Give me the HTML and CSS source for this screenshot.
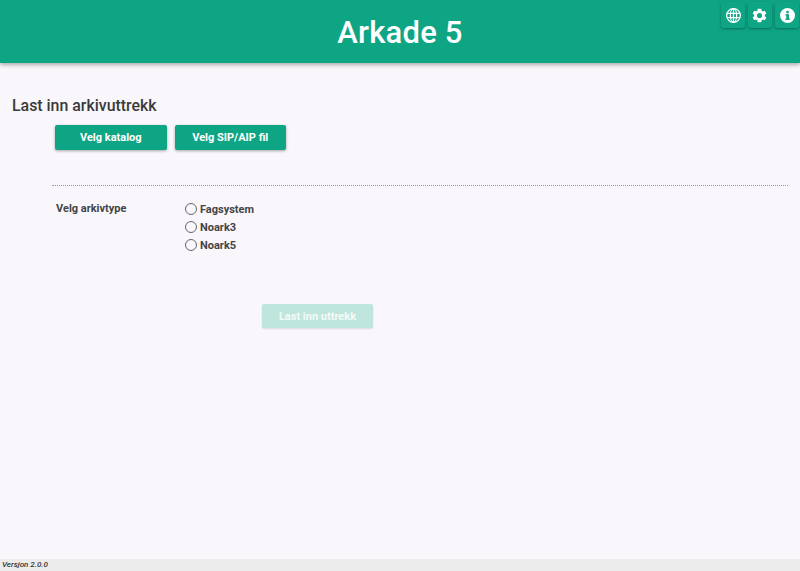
FILE: index.html
```html
<!DOCTYPE html>
<html lang="no">
<head>
<meta charset="utf-8">
<title>Arkade 5</title>
<link rel="stylesheet" href="styles.css">
</head>
<body>
<div class="app">
  <header class="header">
    <h1 class="title">Arkade 5</h1>
    <div class="actions">
      <button class="icon-btn" aria-label="Språk">
        <svg viewBox="0 0 24 24" width="15" height="15" fill="none" stroke="#fff" stroke-width="2"><circle cx="12" cy="12" r="11"/><ellipse cx="12" cy="12" rx="5" ry="11"/><path d="M12 1v22M1.5 8.5h21M1.5 15.5h21"/></svg>
      </button>
      <button class="icon-btn gear" aria-label="Innstillinger">
        <svg viewBox="0 0 24 24" width="17" height="17" fill="#fff"><path d="M19.4 13a7.6 7.6 0 0 0 0-2l2.3-1.8-2.3-3.9-2.7 1.1a7.4 7.4 0 0 0-1.7-1L14.6 2.5H9.4L9 5.4a7.4 7.4 0 0 0-1.7 1L4.6 5.3 2.3 9.2 4.6 11a7.6 7.6 0 0 0 0 2l-2.3 1.8 2.3 3.9 2.7-1.1a7.4 7.4 0 0 0 1.7 1l.4 2.9h5.2l.4-2.9a7.4 7.4 0 0 0 1.7-1l2.7 1.1 2.3-3.9zM12 15.6a3.6 3.6 0 1 1 0-7.2 3.6 3.6 0 0 1 0 7.2z"/></svg>
      </button>
      <button class="icon-btn" aria-label="Informasjon">
        <svg viewBox="0 0 24 24" width="15" height="15"><circle cx="12" cy="12" r="12" fill="#fff"/><rect x="10" y="10" width="4.4" height="9" fill="#0ea585"/><rect x="8.6" y="10" width="4" height="2" fill="#0ea585"/><rect x="8.6" y="17" width="7.2" height="2" fill="#0ea585"/><circle cx="12" cy="6.5" r="2.2" fill="#0ea585"/></svg>
      </button>
    </div>
  </header>

  <main class="main">
    <h2 class="heading">Last inn arkivuttrekk</h2>
    <div class="pickers">
      <button class="btn">Velg katalog</button>
      <button class="btn">Velg SIP/AIP fil</button>
    </div>
    <hr class="divider">
    <div class="type-row">
      <div class="type-label">Velg arkivtype</div>
      <div class="radios">
        <label class="radio"><span class="dot"></span>Fagsystem</label>
        <label class="radio"><span class="dot"></span>Noark3</label>
        <label class="radio"><span class="dot"></span>Noark5</label>
      </div>
    </div>
    <div class="submit-row">
      <button class="btn btn-disabled" disabled>Last inn uttrekk</button>
    </div>
  </main>

  <footer class="footer">Versjon 2.0.0</footer>
</div>
</body>
</html>
```
FILE: styles.css
```css
* { box-sizing: border-box; }
html, body { margin: 0; height: 100%; }
body { font-family: Roboto, "Liberation Sans", sans-serif; background: #f9f7fb; color: #333; overflow: hidden; }
.app { height: 571px; display: flex; flex-direction: column; }
.header {
  position: relative;
  height: 63px;
  flex: none;
  background: #0ea585;
  box-shadow: 0 2px 4px rgba(0,0,0,.3);
  display: flex;
  align-items: center;
  justify-content: center;
  padding-top: 1px;
}
.title { margin: 0; color: #fff; font-size: 31px; font-weight: 500; letter-spacing: .2px; }
.actions { position: absolute; top: 2px; right: 1px; display: flex; gap: 3px; }
.icon-btn {
  width: 24px; height: 26px; padding: 0; border: 0; border-radius: 3px;
  background: #0ea585;
  box-shadow: 0 1px 3px rgba(0,0,0,.35);
  display: flex; align-items: center; justify-content: center;
}
.gear { padding-right: 1px; }
.main { flex: 1; padding: 33px 12px 0; }
.heading { margin: 0; font-size: 15.9px; line-height: 20px; font-weight: 500; color: #3a3a3a; }
.pickers { display: flex; gap: 8px; margin: 9px 0 0 43px; }
.btn {
  width: 111.5px; height: 25px; padding: 0; border: 0; border-radius: 2px;
  background: #0ea585; color: #fff;
  font: 700 11px Roboto, "Liberation Sans", sans-serif;
  box-shadow: 0 1px 3px rgba(0,0,0,.35);
}
.divider { margin: 35px 0 0 40px; width: 736px; border: 0; border-top: 1px dotted #999; }
.type-row { display: flex; margin: 14px 0 0 44px; }
.type-label { width: 128.5px; padding-top: 1px; font-size: 11px; font-weight: 700; color: #444; line-height: 16px; }
.radios { display: flex; flex-direction: column; }
.radio { display: flex; align-items: center; height: 18px; font-size: 11px; font-weight: 700; color: #444; }
.dot { width: 12px; height: 12px; margin: 0 3.5px 0 0; border: 1px solid #666; border-radius: 50%; }
.submit-row { margin: 50px 0 0 250px; }
.btn-disabled { width: 111px; height: 24px; background: #bfe6dc; box-shadow: 0 1px 2px rgba(0,0,0,.12); color: #f3faf8; }
.footer { flex: none; height: 12px; background: #ececec; padding-left: 2px; font-size: 8px; line-height: 12px; font-style: italic; font-weight: 500; color: #333; }
```
